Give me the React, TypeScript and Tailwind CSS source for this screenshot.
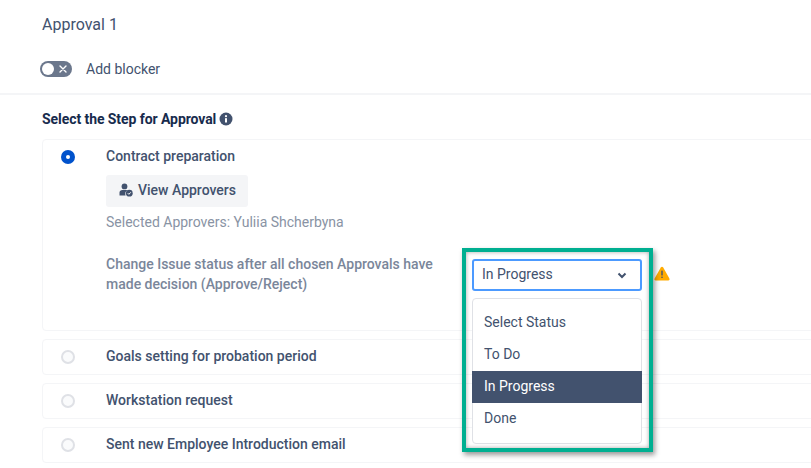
const steps = ["Goals setting for probation period", "Workstation request", "Sent new Employee Introduction email"]
const options = ["Select Status", "To Do", "In Progress", "Done"]

function Toggle() {
  return (
    <div className="flex h-4 w-8 items-center justify-between rounded-full bg-[#6b778c] pl-[2px] pr-[5px]">
      <div className="h-3 w-3 rounded-full bg-white" />
      <svg width="8" height="8" viewBox="0 0 8 8" fill="none" stroke="#fff" strokeWidth="1.4" strokeLinecap="round">
        <path d="M1 1l6 6M7 1L1 7" />
      </svg>
    </div>
  )
}

function InfoIcon() {
  return (
    <svg width="14" height="14" viewBox="0 0 14 14">
      <circle cx="7" cy="7" r="6.5" fill="#42526e" />
      <rect x="6" y="6" width="2" height="4.6" rx="0.4" fill="#fff" />
      <circle cx="7" cy="4.2" r="1.1" fill="#fff" />
    </svg>
  )
}

function ApproverIcon() {
  return (
    <svg width="14" height="14" viewBox="0 0 14 14">
      <circle cx="5.5" cy="3.4" r="2.9" fill="#42526e" />
      <path d="M0.5 12.5V9.6C0.5 7.9 1.8 7 3.4 7h3.6c.5 0 .9.1 1.3.3A4.4 4.4 0 0 0 6.6 12.5z" fill="#42526e" />
      <circle cx="10.3" cy="10.2" r="3.4" fill="#42526e" />
      <path d="M8.8 10.2l1.1 1.1 1.9-2" fill="none" stroke="#fff" strokeWidth="1" />
    </svg>
  )
}

function WarningIcon() {
  return (
    <svg width="16" height="15" viewBox="0 0 16 15">
      <path d="M8 0.8c.5 0 .9.3 1.2.8l6.2 10.9c.5.9 0 1.9-1.1 1.9H1.7c-1.1 0-1.6-1-1.1-1.9L6.8 1.6C7.1 1.1 7.5.8 8 .8z" fill="#ffab00" />
      <rect x="7.3" y="4.6" width="1.4" height="5" rx="0.5" fill="#42526e" />
      <rect x="7.3" y="10.5" width="1.4" height="1.5" rx="0.5" fill="#42526e" />
    </svg>
  )
}

function Chevron() {
  return (
    <svg width="10" height="7" viewBox="0 0 10 7" fill="none" stroke="#42526e" strokeWidth="2">
      <path d="M1.5 1.5L5 5l3.5-3.5" />
    </svg>
  )
}

export default function App() {
  return (
    <div className="relative h-[468px] w-[811px] overflow-hidden bg-white font-['Roboto',sans-serif] text-sm text-[#42526e]">
      <div className="px-[42px] pt-[15px] text-base leading-5">Approval 1</div>

      <div className="mt-6 flex h-5 items-center gap-[14px] pl-10">
        <Toggle />
        <span className="leading-5">Add blocker</span>
      </div>

      <div className="mt-[14px] border-t-2 border-[#f4f5f7] pl-[42px] pt-[14px]">
        <div className="flex items-center gap-[3px] font-bold leading-5 tracking-[-0.07px] text-[#172b4d]">
          Select the Step for Approval
          <InfoIcon />
        </div>

        <div className="mt-[10px] -mr-4 flex h-[192px] rounded-[4px] border border-[#f4f5f7] pl-[18px] pt-[6px]">
          <div className="mt-1 flex h-[14px] w-[14px] items-center justify-center rounded-full bg-[#0052cc]">
            <div className="h-1 w-1 rounded-full bg-white" />
          </div>
          <div className="ml-[31px]">
            <div className="font-medium leading-5">Contract preparation</div>
            <div className="mt-[9px] flex h-8 w-[142px] items-center gap-[5px] rounded-[3px] bg-[#f4f5f7] pb-[2px] pl-[13px] font-medium">
              <ApproverIcon />
              <span>View Approvers</span>
            </div>
            <div className="mt-[5px] leading-5 text-[#8993a4]">Selected Approvers: Yuliia Shcherbyna</div>
            <div className="mt-[22px] flex">
              <div className="w-[366px] pr-[30px] font-medium leading-5 text-[#7a869a]">
                Change Issue status after all chosen Approvals have made decision (Approve/Reject)
              </div>
              <div className="relative mt-[5px] h-8 w-[170px]">
                <div className="flex h-8 items-center justify-between rounded-[3px] border-2 border-[#4c9aff] pl-2 pr-[13px]">
                  <span className="pb-[2px]">In Progress</span>
                  <Chevron />
                </div>
                <div className="absolute left-0 top-[39px] z-10 w-[170px] rounded-[4px] border border-[#dfe1e6] bg-white py-2">
                  {options.map((o) => (
                    <div
                      key={o}
                      className={`-mx-px flex h-8 items-center pb-[2px] pl-3 ${o === "In Progress" ? "bg-[#42526e] text-white" : ""}`}
                    >
                      {o}
                    </div>
                  ))}
                </div>
                <div className="absolute left-[182px] top-[7px]">
                  <WarningIcon />
                </div>
                <div className="absolute -left-[10px] -top-[11px] z-20 h-[204px] w-[191px] border-4 border-[#00af91] shadow-[2px_3px_5px_rgba(0,0,0,0.4),inset_0_0_4px_rgba(0,0,0,0.35)]" />
              </div>
            </div>
          </div>
        </div>

        <div className="-mr-4 mt-2 flex flex-col gap-2">
          {steps.map((s) => (
            <div key={s} className="flex h-9 items-center rounded-[4px] border border-[#f4f5f7] pl-[18px]">
              <div className="h-[14px] w-[14px] rounded-full border-2 border-[#dfe1e6] bg-[#fafbfc]" />
              <div className="ml-[31px] pb-[2px] font-medium text-[#42526e]">{s}</div>
            </div>
          ))}
        </div>
      </div>
    </div>
  )
}
